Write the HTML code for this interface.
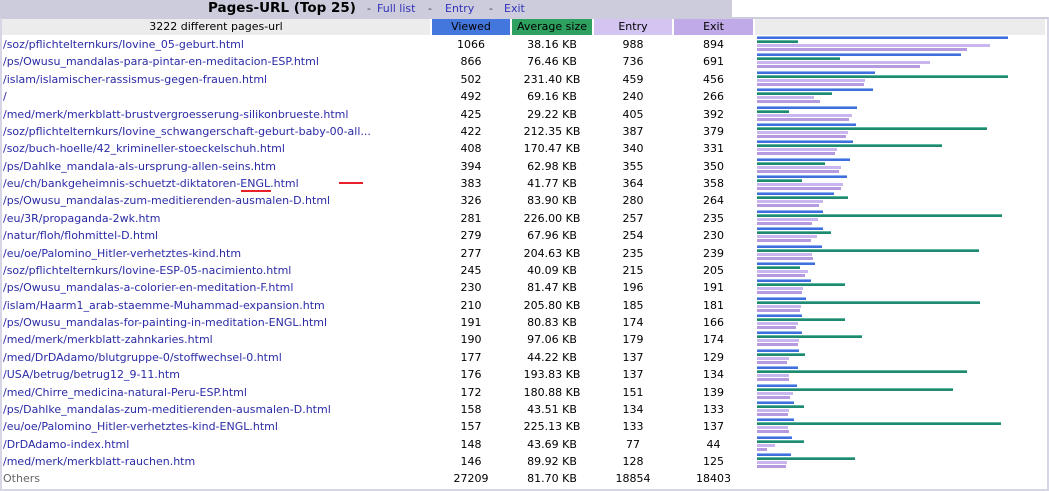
<!DOCTYPE html>
<html><head><meta charset="utf-8"><style>
body{margin:0;width:1049px;height:490px;background:#fff;position:relative;overflow:hidden;font-family:"DejaVu Sans","Liberation Sans",sans-serif;font-size:11px;color:#000}
.t{position:absolute;left:0;top:0;width:732px;height:18px;background:#ccccdd}
.t .h{position:absolute;left:208px;top:0px;font-weight:bold;font-size:13.5px;color:#000}
.t a{position:absolute;top:2px;color:#3333bb;text-decoration:none;font-size:11px}
.t s{position:absolute;top:2px;text-decoration:none;color:#444}
.fr{position:absolute;left:0;top:17px;width:1045px;height:470px;border:2px solid #d6d6e6;border-top:2px solid #ccccdd;box-sizing:content-box}
.hd{position:absolute;top:19px;height:16px;line-height:16px;text-align:center}
.r{position:absolute;left:0;width:1045px;height:17px;line-height:17px}
.r span{position:absolute;top:1px;text-align:center}
.r .u{left:3px;text-align:left;color:#2a2aa6;white-space:nowrap}
.r .v{left:432px;width:78px}.r .a{left:512px;width:80px}.r .e{left:594px;width:78px}.r .x{left:674px;width:79px}
.r i{position:absolute;left:757px;height:3px}
.r i.b{top:1px;background:#3f6fdc;border-top:1px solid #8fb0ee;height:2px}
.r i.g{top:5px;background:#1f8a70;border-top:1px solid #5cb6a0;height:2px}
.r i.n{top:9px;background:#c9b6ee;height:3px}
.r i.o{top:13px;background:#b59ae0;height:3px}
</style></head><body>
<div class="t"><span class="h">Pages-URL (Top 25)</span><s style="left:367px">-</s><a style="left:377px">Full list</a><s style="left:428px">-</s><a style="left:445px">Entry</a><s style="left:489px">-</s><a style="left:504px">Exit</a></div>
<div class="fr"></div>
<div class="hd" style="left:2px;width:428px;background:#ececec">3222 different pages-url</div>
<div class="hd" style="left:432px;width:78px;background:#4477dd">Viewed</div>
<div class="hd" style="left:512px;width:80px;background:#2ea060">Average size</div>
<div class="hd" style="left:594px;width:78px;background:#d4c4f2">Entry</div>
<div class="hd" style="left:674px;width:79px;background:#c0aae8">Exit</div>
<div class="hd" style="left:755px;width:290px;background:#ececec"></div>

<div class="r" style="top:35px"><span class="u">/soz/pflichtelternkurs/Iovine_05-geburt.html</span><span class="v">1066</span><span class="a">38.16 KB</span><span class="e">988</span><span class="x">894</span><i class="b" style="width:251px"></i><i class="g" style="width:41px"></i><i class="n" style="width:233px"></i><i class="o" style="width:210px"></i></div>
<div class="r" style="top:52.4px"><span class="u">/ps/Owusu_mandalas-para-pintar-en-meditacion-ESP.html</span><span class="v">866</span><span class="a">76.46 KB</span><span class="e">736</span><span class="x">691</span><i class="b" style="width:204px"></i><i class="g" style="width:83px"></i><i class="n" style="width:173px"></i><i class="o" style="width:163px"></i></div>
<div class="r" style="top:69.75px"><span class="u">/islam/islamischer-rassismus-gegen-frauen.html</span><span class="v">502</span><span class="a">231.40 KB</span><span class="e">459</span><span class="x">456</span><i class="b" style="width:118px"></i><i class="g" style="width:251px"></i><i class="n" style="width:108px"></i><i class="o" style="width:107px"></i></div>
<div class="r" style="top:87.1px"><span class="u">/</span><span class="v">492</span><span class="a">69.16 KB</span><span class="e">240</span><span class="x">266</span><i class="b" style="width:116px"></i><i class="g" style="width:75px"></i><i class="n" style="width:57px"></i><i class="o" style="width:63px"></i></div>
<div class="r" style="top:104.5px"><span class="u">/med/merk/merkblatt-brustvergroesserung-silikonbrueste.html</span><span class="v">425</span><span class="a">29.22 KB</span><span class="e">405</span><span class="x">392</span><i class="b" style="width:100px"></i><i class="g" style="width:32px"></i><i class="n" style="width:95px"></i><i class="o" style="width:92px"></i></div>
<div class="r" style="top:121.9px"><span class="u">/soz/pflichtelternkurs/Iovine_schwangerschaft-geburt-baby-00-all...</span><span class="v">422</span><span class="a">212.35 KB</span><span class="e">387</span><span class="x">379</span><i class="b" style="width:99px"></i><i class="g" style="width:230px"></i><i class="n" style="width:91px"></i><i class="o" style="width:89px"></i></div>
<div class="r" style="top:139.25px"><span class="u">/soz/buch-hoelle/42_krimineller-stoeckelschuh.html</span><span class="v">408</span><span class="a">170.47 KB</span><span class="e">340</span><span class="x">331</span><i class="b" style="width:96px"></i><i class="g" style="width:185px"></i><i class="n" style="width:80px"></i><i class="o" style="width:78px"></i></div>
<div class="r" style="top:156.6px"><span class="u">/ps/Dahlke_mandala-als-ursprung-allen-seins.htm</span><span class="v">394</span><span class="a">62.98 KB</span><span class="e">355</span><span class="x">350</span><i class="b" style="width:93px"></i><i class="g" style="width:68px"></i><i class="n" style="width:84px"></i><i class="o" style="width:82px"></i></div>
<div class="r" style="top:174px"><span class="u">/eu/ch/bankgeheimnis-schuetzt-diktatoren-ENGL.html</span><span class="v">383</span><span class="a">41.77 KB</span><span class="e">364</span><span class="x">358</span><i class="b" style="width:90px"></i><i class="g" style="width:45px"></i><i class="n" style="width:86px"></i><i class="o" style="width:84px"></i></div>
<div class="r" style="top:191.4px"><span class="u">/ps/Owusu_mandalas-zum-meditierenden-ausmalen-D.html</span><span class="v">326</span><span class="a">83.90 KB</span><span class="e">280</span><span class="x">264</span><i class="b" style="width:77px"></i><i class="g" style="width:91px"></i><i class="n" style="width:66px"></i><i class="o" style="width:62px"></i></div>
<div class="r" style="top:208.75px"><span class="u">/eu/3R/propaganda-2wk.htm</span><span class="v">281</span><span class="a">226.00 KB</span><span class="e">257</span><span class="x">235</span><i class="b" style="width:66px"></i><i class="g" style="width:245px"></i><i class="n" style="width:61px"></i><i class="o" style="width:55px"></i></div>
<div class="r" style="top:226.1px"><span class="u">/natur/floh/flohmittel-D.html</span><span class="v">279</span><span class="a">67.96 KB</span><span class="e">254</span><span class="x">230</span><i class="b" style="width:66px"></i><i class="g" style="width:74px"></i><i class="n" style="width:60px"></i><i class="o" style="width:54px"></i></div>
<div class="r" style="top:243.5px"><span class="u">/eu/oe/Palomino_Hitler-verhetztes-kind.htm</span><span class="v">277</span><span class="a">204.63 KB</span><span class="e">235</span><span class="x">239</span><i class="b" style="width:65px"></i><i class="g" style="width:222px"></i><i class="n" style="width:55px"></i><i class="o" style="width:56px"></i></div>
<div class="r" style="top:260.9px"><span class="u">/soz/pflichtelternkurs/Iovine-ESP-05-nacimiento.html</span><span class="v">245</span><span class="a">40.09 KB</span><span class="e">215</span><span class="x">205</span><i class="b" style="width:58px"></i><i class="g" style="width:43px"></i><i class="n" style="width:51px"></i><i class="o" style="width:48px"></i></div>
<div class="r" style="top:278.25px"><span class="u">/ps/Owusu_mandalas-a-colorier-en-meditation-F.html</span><span class="v">230</span><span class="a">81.47 KB</span><span class="e">196</span><span class="x">191</span><i class="b" style="width:54px"></i><i class="g" style="width:88px"></i><i class="n" style="width:46px"></i><i class="o" style="width:45px"></i></div>
<div class="r" style="top:295.6px"><span class="u">/islam/Haarm1_arab-staemme-Muhammad-expansion.htm</span><span class="v">210</span><span class="a">205.80 KB</span><span class="e">185</span><span class="x">181</span><i class="b" style="width:49px"></i><i class="g" style="width:223px"></i><i class="n" style="width:44px"></i><i class="o" style="width:43px"></i></div>
<div class="r" style="top:313px"><span class="u">/ps/Owusu_mandalas-for-painting-in-meditation-ENGL.html</span><span class="v">191</span><span class="a">80.83 KB</span><span class="e">174</span><span class="x">166</span><i class="b" style="width:45px"></i><i class="g" style="width:88px"></i><i class="n" style="width:41px"></i><i class="o" style="width:39px"></i></div>
<div class="r" style="top:330.4px"><span class="u">/med/merk/merkblatt-zahnkaries.html</span><span class="v">190</span><span class="a">97.06 KB</span><span class="e">179</span><span class="x">174</span><i class="b" style="width:45px"></i><i class="g" style="width:105px"></i><i class="n" style="width:42px"></i><i class="o" style="width:41px"></i></div>
<div class="r" style="top:347.75px"><span class="u">/med/DrDAdamo/blutgruppe-0/stoffwechsel-0.html</span><span class="v">177</span><span class="a">44.22 KB</span><span class="e">137</span><span class="x">129</span><i class="b" style="width:42px"></i><i class="g" style="width:48px"></i><i class="n" style="width:32px"></i><i class="o" style="width:30px"></i></div>
<div class="r" style="top:365.1px"><span class="u">/USA/betrug/betrug12_9-11.htm</span><span class="v">176</span><span class="a">193.83 KB</span><span class="e">137</span><span class="x">134</span><i class="b" style="width:41px"></i><i class="g" style="width:210px"></i><i class="n" style="width:32px"></i><i class="o" style="width:32px"></i></div>
<div class="r" style="top:382.5px"><span class="u">/med/Chirre_medicina-natural-Peru-ESP.html</span><span class="v">172</span><span class="a">180.88 KB</span><span class="e">151</span><span class="x">139</span><i class="b" style="width:40px"></i><i class="g" style="width:196px"></i><i class="n" style="width:36px"></i><i class="o" style="width:33px"></i></div>
<div class="r" style="top:399.9px"><span class="u">/ps/Dahlke_mandalas-zum-meditierenden-ausmalen-D.html</span><span class="v">158</span><span class="a">43.51 KB</span><span class="e">134</span><span class="x">133</span><i class="b" style="width:37px"></i><i class="g" style="width:47px"></i><i class="n" style="width:32px"></i><i class="o" style="width:31px"></i></div>
<div class="r" style="top:417.25px"><span class="u">/eu/oe/Palomino_Hitler-verhetztes-kind-ENGL.html</span><span class="v">157</span><span class="a">225.13 KB</span><span class="e">133</span><span class="x">137</span><i class="b" style="width:37px"></i><i class="g" style="width:244px"></i><i class="n" style="width:31px"></i><i class="o" style="width:32px"></i></div>
<div class="r" style="top:434.6px"><span class="u">/DrDAdamo-index.html</span><span class="v">148</span><span class="a">43.69 KB</span><span class="e">77</span><span class="x">44</span><i class="b" style="width:35px"></i><i class="g" style="width:47px"></i><i class="n" style="width:18px"></i><i class="o" style="width:10px"></i></div>
<div class="r" style="top:452px"><span class="u">/med/merk/merkblatt-rauchen.htm</span><span class="v">146</span><span class="a">89.92 KB</span><span class="e">128</span><span class="x">125</span><i class="b" style="width:34px"></i><i class="g" style="width:98px"></i><i class="n" style="width:30px"></i><i class="o" style="width:29px"></i></div>
<div class="r" style="top:469.4px"><span class="u" style="color:#666">Others</span><span class="v">27209</span><span class="a">81.70 KB</span><span class="e">18854</span><span class="x">18403</span></div>

<div style="position:absolute;left:339px;top:182px;width:24px;height:2px;background:#e8202a"></div>
<div style="position:absolute;left:241px;top:190px;width:30px;height:2px;background:#e8202a"></div>
</body></html>
